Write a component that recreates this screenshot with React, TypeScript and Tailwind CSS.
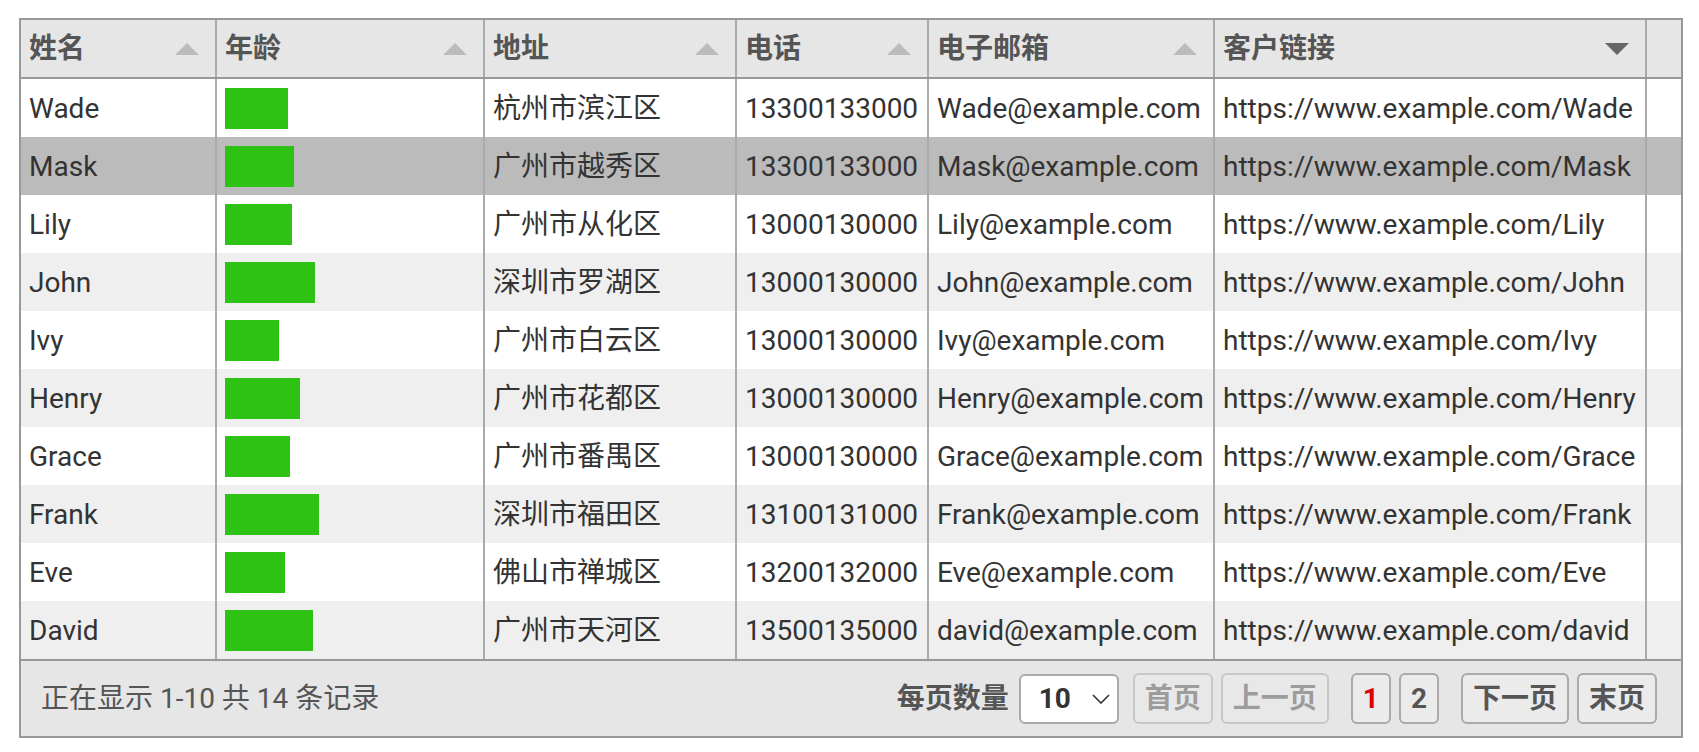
import React from "react";

type Customer = {
  name: string;
  age: number;
  address: string;
  phone: string;
  email: string;
  link: string;
};

const customers: Customer[] = [
  { name: "Wade", age: 25, address: "杭州市滨江区", phone: "13300133000", email: "Wade@example.com", link: "https://www.example.com/Wade" },
  { name: "Mask", age: 27.6, address: "广州市越秀区", phone: "13300133000", email: "Mask@example.com", link: "https://www.example.com/Mask" },
  { name: "Lily", age: 26.8, address: "广州市从化区", phone: "13000130000", email: "Lily@example.com", link: "https://www.example.com/Lily" },
  { name: "John", age: 36, address: "深圳市罗湖区", phone: "13000130000", email: "John@example.com", link: "https://www.example.com/John" },
  { name: "Ivy", age: 21.6, address: "广州市白云区", phone: "13000130000", email: "Ivy@example.com", link: "https://www.example.com/Ivy" },
  { name: "Henry", age: 30, address: "广州市花都区", phone: "13000130000", email: "Henry@example.com", link: "https://www.example.com/Henry" },
  { name: "Grace", age: 26, address: "广州市番禺区", phone: "13000130000", email: "Grace@example.com", link: "https://www.example.com/Grace" },
  { name: "Frank", age: 37.6, address: "深圳市福田区", phone: "13100131000", email: "Frank@example.com", link: "https://www.example.com/Frank" },
  { name: "Eve", age: 24, address: "佛山市禅城区", phone: "13200132000", email: "Eve@example.com", link: "https://www.example.com/Eve" },
  { name: "David", age: 35.2, address: "广州市天河区", phone: "13500135000", email: "david@example.com", link: "https://www.example.com/david" },
];

const columns = [
  { title: "姓名", width: "w-[196px]", sort: "none" },
  { title: "年龄", width: "w-[268px]", sort: "none" },
  { title: "地址", width: "w-[252px]", sort: "none" },
  { title: "电话", width: "w-[192px]", sort: "none" },
  { title: "电子邮箱", width: "w-[286px]", sort: "none" },
  { title: "客户链接", width: "w-[432px]", sort: "desc" },
];

const SortArrow: React.FC<{ active: boolean }> = ({ active }) =>
  active ? (
    <span className="mr-[8px] h-0 w-0 border-x-[12px] border-t-[12px] border-x-transparent border-t-[#666]" />
  ) : (
    <span className="mr-[8px] h-0 w-0 border-x-[12px] border-b-[12px] border-x-transparent border-b-[#bbb]" />
  );

const Cell: React.FC<{ width: string; children: React.ReactNode }> = ({ width, children }) => (
  <div className={`${width} flex h-full shrink-0 items-center overflow-hidden whitespace-nowrap border-r-2 border-[#aaa] px-[8px] pt-[1px]`}>
    {children}
  </div>
);

const PageButton: React.FC<{ label: string; disabled?: boolean; active?: boolean }> = ({ label, disabled, active }) => (
  <button
    className={`mx-[4px] flex h-[51px] items-center rounded-[6px] border-2 border-[#aaa] bg-white/20 px-[10px] font-bold ${
      disabled ? "opacity-50" : ""
    } ${active ? "text-[#d00]" : "text-[#555]"}`}
  >
    {label}
  </button>
);

const App: React.FC = () => {
  return (
    <div
      className="min-h-screen bg-white pl-[19px] pr-[16px] pt-[18px] text-[28px] leading-tight"
      style={{ fontFamily: 'Roboto, "Noto Sans CJK SC", sans-serif' }}
    >
      <div className="border-2 border-[#999]">
        {/* header */}
        <div className="flex h-[59px] border-b-2 border-[#999] bg-[#e6e6e6] font-bold text-[#555]">
          {columns.map((col) => (
            <div
              key={col.title}
              className={`${col.width} flex shrink-0 items-center justify-between border-r-2 border-[#aaa] px-[8px]`}
            >
              <span>{col.title}</span>
              <SortArrow active={col.sort === "desc"} />
            </div>
          ))}
          <div className="flex-1" />
        </div>

        {/* rows */}
        {customers.map((c, i) => (
          <div
            key={c.name}
            className={`flex h-[58px] text-[#333] ${
              i === 1 ? "bg-[#bbb]" : i % 2 === 1 ? "bg-[#efefef]" : "bg-white"
            }`}
          >
            <Cell width="w-[196px]">{c.name}</Cell>
            <Cell width="w-[268px]">
              <div className="h-[41px] bg-[#2dc214]" style={{ width: `${c.age}%` }} />
            </Cell>
            <Cell width="w-[252px]">{c.address}</Cell>
            <Cell width="w-[192px]">{c.phone}</Cell>
            <Cell width="w-[286px]">{c.email}</Cell>
            <Cell width="w-[432px]">{c.link}</Cell>
            <div className="flex-1" />
          </div>
        ))}

        {/* footer */}
        <div className="flex h-[77px] items-center justify-between border-t-2 border-[#999] bg-[#e6e6e6] px-[20px] text-[#555]">
          <span>正在显示 1-10 共 14 条记录</span>
          <div className="flex items-center">
            <span className="font-bold">每页数量</span>
            <div className="relative mx-[10px]">
              <select className="h-[50px] w-[100px] appearance-none rounded-[6px] border-2 border-[#aaa] bg-white pl-[18px] font-bold text-[#333]">
                <option>10</option>
              </select>
              <svg
                className="pointer-events-none absolute right-[9px] top-[20px]"
                width="18"
                height="10"
                viewBox="0 0 18 10"
                fill="none"
                stroke="#333"
                strokeWidth="1.6"
              >
                <path d="M1 1l8 8 8-8" />
              </svg>
            </div>
            <PageButton label="首页" disabled />
            <PageButton label="上一页" disabled />
            <div className="mx-[14px] flex">
              <PageButton label="1" active />
              <PageButton label="2" />
            </div>
            <PageButton label="下一页" />
            <PageButton label="末页" />
          </div>
        </div>
      </div>
    </div>
  );
};

export default App;
